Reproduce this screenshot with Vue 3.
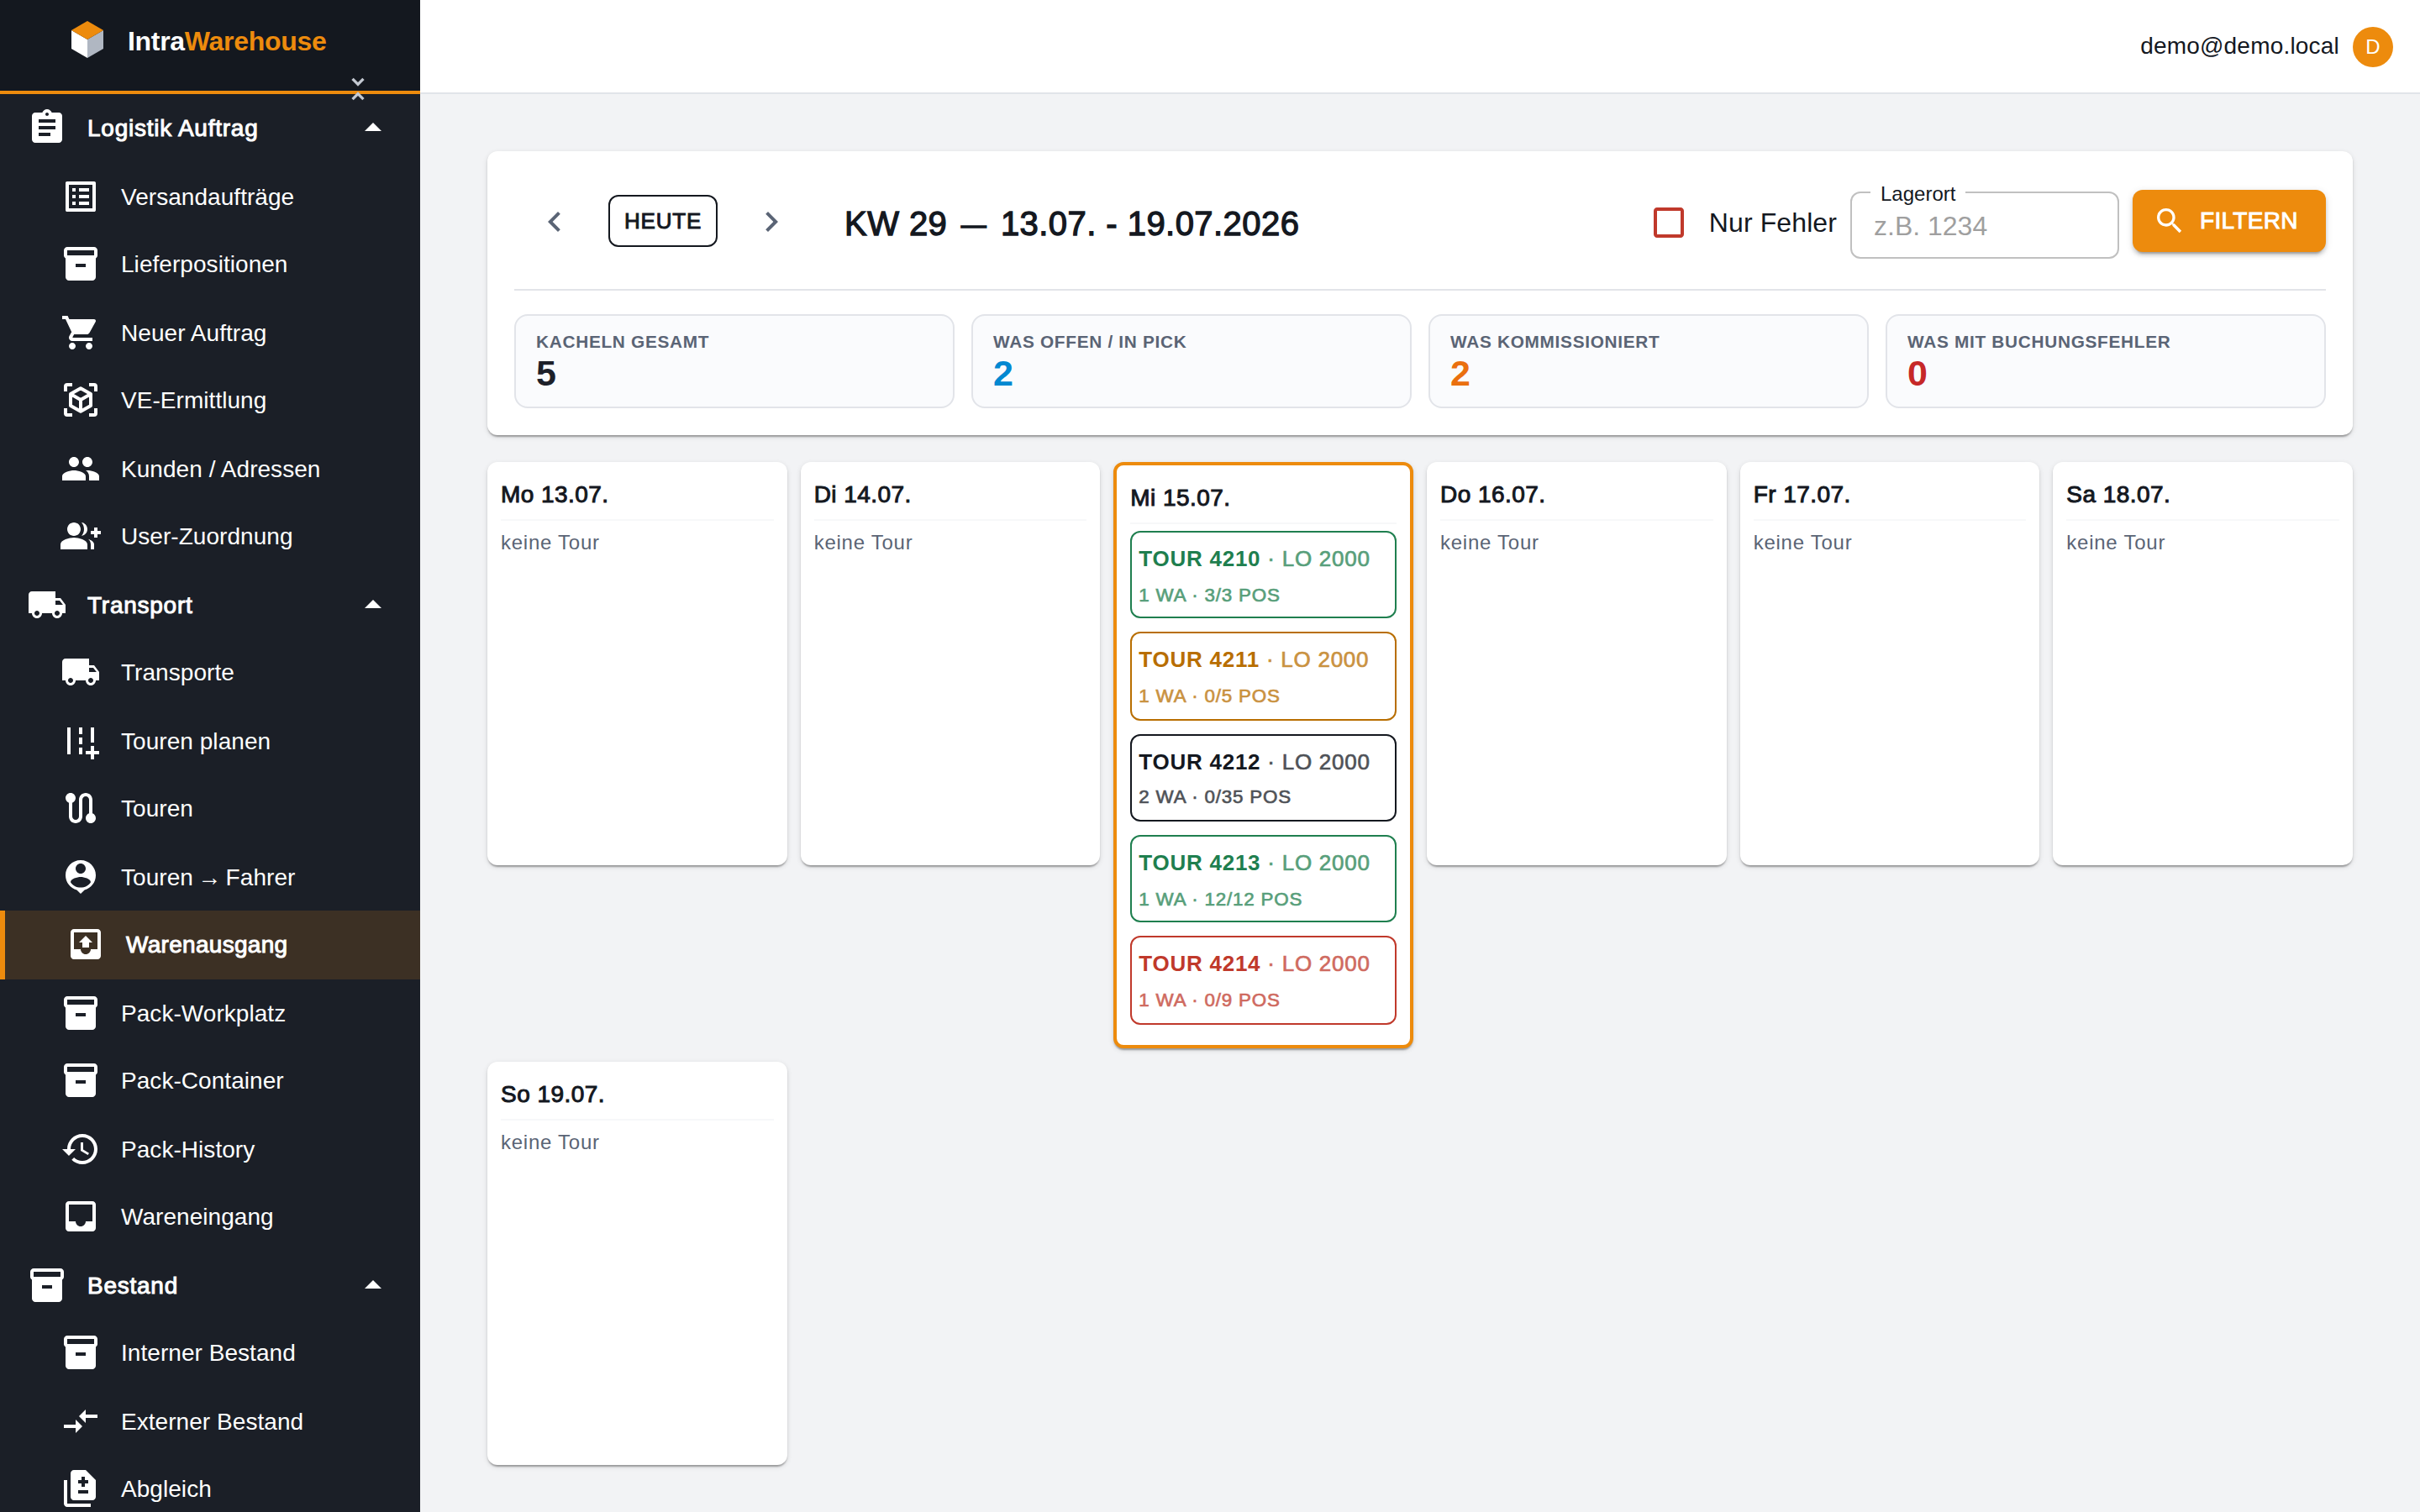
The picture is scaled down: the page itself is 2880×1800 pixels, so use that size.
<template>
  <div class="layout">
    <aside class="sidebar">
      <div class="brand">
        <svg class="brand-logo" viewBox="0 0 38 44">
          <path fill="#fff" d="M0 11l19 11v22L0 33z" />
          <path fill="#b0b7c2" d="M38 11L19 22v22l19-11z" />
          <path fill="#ed8b0d" d="M19 0l19 11-19 11L0 11z" />
        </svg>
        <span class="brand-name">Intra<em>Warehouse</em></span>
        <svg class="brand-fold" viewBox="0 0 24 24"><path :d="icons.unfoldLess" /></svg>
      </div>
      <nav class="nav">
        <a
          v-for="item in menu"
          :key="item.label"
          class="nav-item"
          :class="{ parent: item.parent, active: item.active, tight: item.tight }"
        >
          <svg v-if="item.icon === 'viewInAr'" class="icon outline" viewBox="0 0 24 24">
            <path :d="icons.viewInAr" />
          </svg>
          <svg v-else class="icon" viewBox="0 0 24 24"><path :d="icons[item.icon]" /></svg>
          <span class="nav-label">{{ item.label }}</span>
          <svg v-if="item.parent" class="icon" viewBox="0 0 24 24"><path d="M7 14l5-5 5 5z" /></svg>
        </a>
      </nav>
    </aside>

    <div class="page">
      <header class="topbar">
        <span class="user">demo@demo.local</span>
        <span class="avatar">D</span>
      </header>

      <main class="content">
        <section class="panel">
          <div class="toolbar">
            <button class="icon-btn" @click="week--">
              <svg class="icon" viewBox="0 0 24 24"><path d="M15.41 7.41 14 6l-6 6 6 6 1.41-1.41L10.83 12z" /></svg>
            </button>
            <button class="btn-today" @click="week = 29">HEUTE</button>
            <button class="icon-btn" @click="week++">
              <svg class="icon" viewBox="0 0 24 24"><path d="M10 6 8.59 7.41 13.17 12l-4.58 4.59L10 18l6-6z" /></svg>
            </button>
            <h1 class="title">KW {{ week }} <span class="dash">—</span> 13.07. - 19.07.2026</h1>
            <div class="filters">
              <label class="check" @click="onlyErrors = !onlyErrors">
                <svg class="icon" viewBox="0 0 24 24"><path :d="icons.checkbox" /></svg>
                <span>Nur Fehler</span>
              </label>
              <div class="field">
                <span class="field-label">Lagerort</span>
                <input v-model="location" class="field-input" placeholder="z.B. 1234" />
              </div>
              <button class="btn-filter">
                <svg viewBox="0 0 24 24"><path :d="icons.search" /></svg>
                <span>FILTERN</span>
              </button>
            </div>
          </div>
          <div class="stats">
            <div v-for="s in stats" :key="s.label" class="stat">
              <div class="stat-label">{{ s.label }}</div>
              <div class="stat-value" :class="s.tone">{{ s.value }}</div>
            </div>
          </div>
        </section>

        <section class="days">
          <div v-for="day in days" :key="day.label" class="day" :class="{ today: day.tours.length }">
            <h2 class="day-title">{{ day.label }}</h2>
            <div v-if="day.tours.length" class="tours">
              <div v-for="t in day.tours" :key="t.nr" class="tour" :class="t.tone">
                <div class="tour-head"><b>TOUR {{ t.nr }}</b><span> · LO 2000</span></div>
                <div class="tour-info">{{ t.info }}</div>
              </div>
            </div>
            <p v-else class="empty">keine Tour</p>
          </div>
        </section>
      </main>
    </div>
  </div>
</template>

<script setup>
import { ref } from 'vue';

const week = ref(29);
const onlyErrors = ref(false);
const location = ref('');

const icons = {
  unfoldLess: 'M7.41 18.59 8.83 20 12 16.83 15.17 20l1.41-1.41L12 14l-4.59 4.59zm9.18-13.18L15.17 4 12 7.17 8.83 4 7.41 5.41 12 10l4.59-4.59z',
  assignment: 'M19 3h-4.18C14.4 1.84 13.3 1 12 1c-1.3 0-2.4.84-2.82 2H5c-1.1 0-2 .9-2 2v14c0 1.1.9 2 2 2h14c1.1 0 2-.9 2-2V5c0-1.1-.9-2-2-2zm-7 0c.55 0 1 .45 1 1s-.45 1-1 1-1-.45-1-1 .45-1 1-1zm2 14H7v-2h7v2zm3-4H7v-2h10v2zm0-4H7V7h10v2z',
  listAlt: 'M19 5v14H5V5h14m1.1-2H3.9c-.5 0-.9.4-.9.9v16.2c0 .4.4.9.9.9h16.2c.4 0 .9-.5.9-.9V3.9c0-.5-.5-.9-.9-.9zM11 7h6v2h-6V7zm0 4h6v2h-6v-2zm0 4h6v2h-6zM7 7h2v2H7zm0 4h2v2H7zm0 4h2v2H7z',
  inventory: 'M20 2H4c-1 0-2 .9-2 2v3.01c0 .72.43 1.34 1 1.69V20c0 1.1 1.1 2 2 2h14c.9 0 2-.9 2-2V8.7c.57-.35 1-.97 1-1.69V4c0-1.1-1-2-2-2zm-5 12H9v-2h6v2zm5-7H4V4h16v3z',
  cart: 'M7 18c-1.1 0-1.99.9-1.99 2S5.9 22 7 22s2-.9 2-2-.9-2-2-2zM1 2v2h2l3.6 7.59-1.35 2.45c-.16.28-.25.61-.25.96 0 1.1.9 2 2 2h12v-2H7.42c-.14 0-.25-.11-.25-.25l.03-.12.9-1.63h7.45c.75 0 1.41-.41 1.75-1.03l3.58-6.49c.08-.14.12-.31.12-.48 0-.55-.45-1-1-1H5.21l-.94-2H1zm16 16c-1.1 0-1.99.9-1.99 2s.89 2 1.99 2 2-.9 2-2-.9-2-2-2z',
  viewInAr: 'M3 7V4a1 1 0 0 1 1-1h3M17 3h3a1 1 0 0 1 1 1v3M21 17v3a1 1 0 0 1-1 1h-3M7 21H4a1 1 0 0 1-1-1v-3M12 5.1l6 3.45v6.9l-6 3.45-6-3.45v-6.9zM6 8.55 12 12l6-3.45M12 12v6.9',
  people: 'M16 11c1.66 0 2.99-1.34 2.99-3S17.66 5 16 5c-1.66 0-3 1.34-3 3s1.34 3 3 3zm-8 0c1.66 0 2.99-1.34 2.99-3S9.66 5 8 5C6.34 5 5 6.34 5 8s1.34 3 3 3zm0 2c-2.33 0-7 1.17-7 3.5V19h14v-2.5c0-2.33-4.67-3.5-7-3.5zm8 0c-.29 0-.62.02-.97.05 1.16.84 1.97 1.97 1.97 3.45V19h6v-2.5c0-2.33-4.67-3.5-7-3.5z',
  groupAdd: 'M22 9V7h-2v2h-2v2h2v2h2v-2h2V9zM8 12c2.21 0 4-1.79 4-4s-1.79-4-4-4-4 1.79-4 4 1.79 4 4 4zm0 1c-2.67 0-8 1.34-8 4v3h16v-3c0-2.66-5.33-4-8-4zm4.51-8.95C13.43 5.11 14 6.49 14 8s-.57 2.89-1.49 3.95C14.47 11.7 16 10.04 16 8s-1.53-3.7-3.49-3.95zm4.02 9.78C17.42 14.66 18 15.7 18 17v3h2v-3c0-1.45-1.59-2.51-3.47-3.17z',
  shipping: 'M20 8h-3V4H3c-1.1 0-2 .9-2 2v11h2c0 1.66 1.34 3 3 3s3-1.34 3-3h6c0 1.66 1.34 3 3 3s3-1.34 3-3h2v-5l-3-4zM6 18.5c-.83 0-1.5-.67-1.5-1.5s.67-1.5 1.5-1.5 1.5.67 1.5 1.5-.67 1.5-1.5 1.5zm13.5-9 1.96 2.5H17V9.5h2.5zm-1.5 9c-.83 0-1.5-.67-1.5-1.5s.67-1.5 1.5-1.5 1.5.67 1.5 1.5-.67 1.5-1.5 1.5z',
  addRoad: 'M20 18v-3h-2v3h-3v2h3v3h2v-3h3v-2zM20 4h-2v9h2zM6 4H4v16h2zm7 0h-2v4h2zm0 6h-2v4h2zm0 6h-2v4h2z',
  route: 'M19 15.18V7c0-2.21-1.79-4-4-4s-4 1.79-4 4v10c0 1.1-.9 2-2 2s-2-.9-2-2V8.82C8.16 8.4 9 7.3 9 6c0-1.66-1.34-3-3-3S3 4.34 3 6c0 1.3.84 2.4 2 2.82V17c0 2.21 1.79 4 4 4s4-1.79 4-4V7c0-1.1.9-2 2-2s2 .9 2 2v8.18c-1.16.41-2 1.51-2 2.82 0 1.66 1.34 3 3 3s3-1.34 3-3c0-1.3-.84-2.4-2-2.82z',
  driver: 'M12 2c-4.97 0-9 4.03-9 9 0 4.17 2.84 7.67 6.69 8.69L12 22l2.31-2.31C18.16 18.67 21 15.17 21 11c0-4.97-4.03-9-9-9zm0 2c1.66 0 3 1.34 3 3s-1.34 3-3 3-3-1.34-3-3 1.34-3 3-3zm0 14.3c-2.5 0-4.71-1.28-6-3.22.03-1.99 4-3.08 6-3.08 1.99 0 5.97 1.09 6 3.08-1.29 1.94-3.5 3.22-6 3.22z',
  outbox: 'M19 3H5c-1.1 0-2 .9-2 2v14c0 1.1.9 2 2 2h14c1.1 0 2-.9 2-2V5c0-1.1-.9-2-2-2zm0 12h-4c0 1.66-1.35 3-3 3s-3-1.34-3-3H5V5h14v10zM8 11h2v3h4v-3h2l-4-4z',
  history: 'M13 3c-4.97 0-9 4.03-9 9H1l3.89 3.89.07.14L9 12H6c0-3.87 3.13-7 7-7s7 3.13 7 7-3.13 7-7 7c-1.93 0-3.68-.79-4.94-2.06l-1.42 1.42C8.27 19.99 10.51 21 13 21c4.97 0 9-4.03 9-9s-4.03-9-9-9zm-1 5v5l4.28 2.54.72-1.21-3.5-2.08V8H12z',
  inbox: 'M19 3H5c-1.1 0-2 .9-2 2v14c0 1.1.9 2 2 2h14c1.1 0 2-.9 2-2V5c0-1.1-.9-2-2-2zm0 12h-4c0 1.66-1.35 3-3 3s-3-1.34-3-3H5V5h14v10z',
  compare: 'M9.01 14H2v2h7.01v3L13 15l-3.99-4zm5.98-1v-3H22V8h-7.01V5L11 9z',
  difference: 'M18 23H4c-1.1 0-2-.9-2-2V7h2v14h14v2zM15 1H8c-1.1 0-1.99.9-1.99 2L6 17c0 1.1.89 2 1.99 2H19c1.1 0 2-.9 2-2V7l-6-6zm1.5 14h-6v-2h6v2zm0-6h-2v2h-2V9h-2V7h2V5h2v2h2v2z',
  checkbox: 'M19 5v14H5V5h14m0-2H5c-1.1 0-2 .9-2 2v14c0 1.1.9 2 2 2h14c1.1 0 2-.9 2-2V5c0-1.1-.9-2-2-2z',
  search: 'M15.5 14h-.79l-.28-.27C15.41 12.59 16 11.11 16 9.5 16 5.91 13.09 3 9.5 3S3 5.91 3 9.5 5.91 16 9.5 16c1.61 0 3.09-.59 4.23-1.57l.27.28v.79l5 4.99L20.49 19l-4.99-5zm-6 0C7.01 14 5 11.99 5 9.5S7.01 5 9.5 5 14 7.01 14 9.5 11.99 14 9.5 14z',
};

const menu = [
  { label: 'Logistik Auftrag', icon: 'assignment', parent: true },
  { label: 'Versandaufträge', icon: 'listAlt' },
  { label: 'Lieferpositionen', icon: 'inventory' },
  { label: 'Neuer Auftrag', icon: 'cart' },
  { label: 'VE-Ermittlung', icon: 'viewInAr' },
  { label: 'Kunden / Adressen', icon: 'people' },
  { label: 'User-Zuordnung', icon: 'groupAdd' },
  { label: 'Transport', icon: 'shipping', parent: true },
  { label: 'Transporte', icon: 'shipping' },
  { label: 'Touren planen', icon: 'addRoad' },
  { label: 'Touren', icon: 'route' },
  { label: 'Touren → Fahrer', icon: 'driver', tight: true },
  { label: 'Warenausgang', icon: 'outbox', active: true },
  { label: 'Pack-Workplatz', icon: 'inventory' },
  { label: 'Pack-Container', icon: 'inventory' },
  { label: 'Pack-History', icon: 'history' },
  { label: 'Wareneingang', icon: 'inbox' },
  { label: 'Bestand', icon: 'inventory', parent: true },
  { label: 'Interner Bestand', icon: 'inventory' },
  { label: 'Externer Bestand', icon: 'compare' },
  { label: 'Abgleich', icon: 'difference' },
];

const stats = [
  { label: 'KACHELN GESAMT', value: 5, tone: 'dark' },
  { label: 'WAS OFFEN / IN PICK', value: 2, tone: 'blue' },
  { label: 'WAS KOMMISSIONIERT', value: 2, tone: 'orange' },
  { label: 'WAS MIT BUCHUNGSFEHLER', value: 0, tone: 'red' },
];

const days = [
  { label: 'Mo 13.07.', tours: [] },
  { label: 'Di 14.07.', tours: [] },
  {
    label: 'Mi 15.07.',
    tours: [
      { nr: 4210, info: '1 WA · 3/3 POS', tone: 'done' },
      { nr: 4211, info: '1 WA · 0/5 POS', tone: 'warn' },
      { nr: 4212, info: '2 WA · 0/35 POS', tone: 'open' },
      { nr: 4213, info: '1 WA · 12/12 POS', tone: 'done' },
      { nr: 4214, info: '1 WA · 0/9 POS', tone: 'error' },
    ],
  },
  { label: 'Do 16.07.', tours: [] },
  { label: 'Fr 17.07.', tours: [] },
  { label: 'Sa 18.07.', tours: [] },
  { label: 'So 19.07.', tours: [] },
];
</script>

<style>
body {
  margin: 0;
  background: #f2f3f5;
}
</style>

<style scoped>
.layout {
  display: flex;
  height: 1800px;
  overflow: hidden;
  font-family: "Liberation Sans", Arial, sans-serif;
  font-size: 28px;
  color: #14181f;
}
.layout * {
  box-sizing: border-box;
}
button {
  font-family: inherit;
  background: none;
  border: none;
  padding: 0;
}
.icon {
  width: 48px;
  height: 48px;
  flex: none;
  display: block;
  fill: currentColor;
}
.icon.outline {
  fill: none;
  stroke: currentColor;
  stroke-width: 2;
  stroke-linejoin: round;
}

/* sidebar */
.sidebar {
  width: 500px;
  flex: none;
  background: #1b1f27;
  color: #fff;
}
.brand {
  position: relative;
  height: 112px;
  display: flex;
  align-items: flex-start;
  padding: 25px 0 0 85px;
  background: #14181f;
  border-bottom: 4px solid #ed8b0d;
}
.brand-logo {
  width: 38px;
  height: 44px;
  margin-right: 29px;
}
.brand-name {
  font-size: 32px;
  line-height: 48px;
  font-weight: 700;
  letter-spacing: -0.3px;
}
.brand-name em {
  font-style: normal;
  color: #ed8b0d;
}
.brand-fold {
  position: absolute;
  left: 406px;
  top: 86px;
  width: 40px;
  height: 40px;
  fill: #c3c8d1;
}
.nav-item {
  display: flex;
  height: 82px;
  padding: 16px 32px 0 72px;
  letter-spacing: 0.05px;
}
.nav-item:nth-child(even) {
  height: 80px;
}
.nav-item.parent {
  padding-left: 32px;
  letter-spacing: 0.75px;
}
.nav-item.active {
  background: #3c3024;
  border-left: 6px solid #ed8b0d;
  letter-spacing: 0.3px;
}
.nav-item.parent .nav-label,
.nav-item.active .nav-label {
  -webkit-text-stroke: 1px currentColor;
}
.nav-item.tight .nav-label {
  word-spacing: -2.5px;
}
.nav-label {
  flex: 1;
  margin-left: 24px;
  line-height: 49px;
  white-space: nowrap;
}

/* top bar */
.page {
  flex: 1;
  min-width: 0;
}
.topbar {
  height: 112px;
  display: flex;
  align-items: center;
  justify-content: flex-end;
  gap: 16px;
  padding-right: 32px;
  background: #fff;
  border-bottom: 2px solid #e1e4e9;
}
.user {
  letter-spacing: 0.2px;
}
.avatar {
  width: 48px;
  height: 48px;
  border-radius: 50%;
  background: #ed8b0d;
  color: #fff;
  font-size: 24px;
  line-height: 47px;
  text-align: center;
  margin-top: 2px;
}

/* filter panel */
.content {
  padding: 68px 80px 0;
}
.panel {
  height: 338px;
  padding: 0 32px;
  background: #fff;
  border-radius: 12px;
  box-shadow: 0 4px 2px -2px rgba(0, 0, 0, 0.2), 0 2px 2px rgba(0, 0, 0, 0.14), 0 2px 6px rgba(0, 0, 0, 0.12);
}
.toolbar {
  display: flex;
  align-items: flex-start;
  height: 166px;
  padding: 46px 0 0 24px;
  border-bottom: 2px solid #e2e4e9;
}
.icon-btn {
  margin-top: 14px;
  color: #5a6475;
}
.btn-today {
  width: 130px;
  height: 62px;
  margin: 6px 40px 0;
  border: 2px solid #14181f;
  border-radius: 12px;
  color: #14181f;
  font-size: 26px;
  letter-spacing: 0.8px;
  -webkit-text-stroke: 1px currentColor;
}
.title {
  margin: 16px 0 0 63px;
  font-size: 40px;
  line-height: 48px;
  font-weight: 400;
  letter-spacing: 0.45px;
  -webkit-text-stroke: 1.3px currentColor;
}
.title .dash {
  margin: 0 5px;
  font-size: 30px;
  line-height: 1;
  vertical-align: 2px;
}
.filters {
  display: flex;
  align-items: flex-start;
  gap: 16px;
  margin-left: auto;
}
.check {
  display: flex;
  align-items: center;
  gap: 24px;
  margin-top: 14px;
  color: #c0392b;
}
.check span {
  font-size: 32px;
  line-height: 50px;
  letter-spacing: 0.1px;
  color: #14181f;
}
.field {
  position: relative;
  width: 320px;
  height: 80px;
  margin-top: 2px;
  border: 2px solid #c0c0c0;
  border-radius: 12px;
}
.field-label {
  position: absolute;
  top: -13px;
  left: 22px;
  padding: 0 12px;
  background: #fff;
  font-size: 24px;
  line-height: 28px;
}
.field-input {
  width: 100%;
  height: 76px;
  padding: 3px 26px 0;
  border: none;
  outline: none;
  background: none;
  font-family: inherit;
  font-size: 32px;
}
.field-input::placeholder {
  color: #9f9f9f;
}
.btn-filter {
  display: flex;
  align-items: center;
  width: 230px;
  height: 74px;
  padding-left: 24px;
  border-radius: 12px;
  background: #ed8b0d;
  color: #fff;
  font-size: 28px;
  letter-spacing: 0.3px;
  -webkit-text-stroke: 1px currentColor;
  box-shadow: 0 6px 2px -4px rgba(0, 0, 0, 0.2), 0 4px 4px rgba(0, 0, 0, 0.14), 0 2px 10px rgba(0, 0, 0, 0.12);
}
.btn-filter svg {
  width: 40px;
  height: 40px;
  margin-right: 16px;
  fill: #fff;
  stroke: none;
}
.btn-filter span {
  line-height: 38px;
}
.stats {
  display: grid;
  grid-template-columns: repeat(4, 1fr);
  gap: 20px;
  margin-top: 28px;
}
.stat {
  height: 112px;
  padding: 19px 24px 0;
  background: #fafbfd;
  border: 2px solid #e2e4e9;
  border-radius: 16px;
}
.stat-label {
  font-size: 20.8px;
  line-height: 24px;
  font-weight: 700;
  letter-spacing: 0.7px;
  color: #5a6475;
}
.stat-value {
  font-size: 43px;
  line-height: 50px;
  font-weight: 700;
}
.stat-value.dark { color: #1d2029; }
.stat-value.blue { color: #0288d1; }
.stat-value.orange { color: #ea700f; }
.stat-value.red { color: #c62828; }

/* week grid */
.days {
  display: grid;
  grid-template-columns: repeat(6, 1fr);
  gap: 16px;
  align-items: start;
  margin-top: 32px;
}
.day {
  min-height: 480px;
  padding: 16px;
  background: #fff;
  border-radius: 12px;
  box-shadow: 0 4px 2px -2px rgba(0, 0, 0, 0.2), 0 2px 2px rgba(0, 0, 0, 0.14), 0 2px 6px rgba(0, 0, 0, 0.12);
}
.day.today {
  height: 698px;
  border: 4px solid #ed8b0d;
}
.day-title {
  height: 54px;
  margin: 0;
  border-bottom: 2px solid #f7f8f9;
  font-size: 28px;
  line-height: 46px;
  font-weight: 400;
  letter-spacing: 0.45px;
  -webkit-text-stroke: 1px currentColor;
}
.empty {
  margin: 10px 0 0;
  font-size: 24px;
  line-height: 32px;
  letter-spacing: 0.75px;
  color: #5a6475;
}
.tours {
  display: flex;
  flex-direction: column;
  gap: 16px;
  margin-top: 8px;
}
.tour {
  height: 104px;
  padding: 14px 0 0 8px;
  border: 2px solid currentColor;
  border-radius: 12px;
  white-space: nowrap;
}
.tour:nth-child(2),
.tour:nth-child(5) {
  height: 106px;
}
.tour-head {
  font-size: 26px;
  line-height: 34px;
  letter-spacing: 0.75px;
}
.tour-head span,
.tour-info {
  opacity: 0.75;
  -webkit-text-stroke: 0.7px currentColor;
}
.tour-info {
  margin-top: 11px;
  font-size: 22.4px;
  line-height: 32px;
  letter-spacing: 0.8px;
}
.tour:nth-child(3) .tour-info {
  margin-top: 9px;
}
.tour.done { color: #1f7f4f; }
.tour.warn { color: #b86e00; }
.tour.open { color: #14181f; }
.tour.error { color: #c0392b; }
</style>
